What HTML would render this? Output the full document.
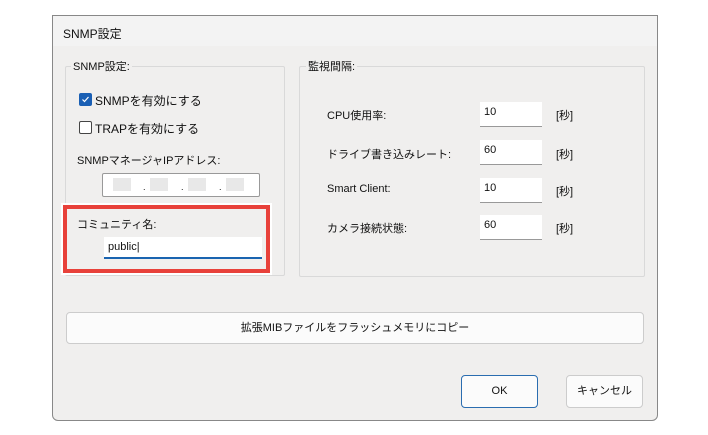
<!DOCTYPE html><html><head><meta charset="utf-8"><style>
*{box-sizing:border-box;margin:0;padding:0}
body{width:708px;height:435px;background:#fff;position:relative;overflow:hidden;font-family:"Liberation Sans","Noto Sans CJK JP",sans-serif;font-size:11px;color:#111}
.a{position:absolute}
.dlg{left:52px;top:15px;width:606px;height:406px;background:#f0efee;border:1px solid #888;border-radius:0 0 6px 6px}
.title{left:53px;top:16px;width:604px;height:30px;background:#f3f3f3;font-size:12px;padding:9px 0 0 10px}
.grp{border:1px solid #d9d9d9;border-radius:2px}
.lg{background:#f0efee;padding:0 2px;font-size:11px}
.tb{background:#fff;border-bottom:1px solid #999;font-size:11px;padding:4px 0 0 4px}
.btn{background:#fbfbfb;border:1px solid #ccc;border-radius:4px;text-align:center;font-size:11px}
.cb{width:13px;height:13px;border:1px solid #444;border-radius:2px;background:#fff}
</style></head><body>
<div class="a dlg"></div>
<div class="a title">SNMP設定</div>
<div class="a grp" style="left:65px;top:66px;width:220px;height:210px"></div>
<div class="a lg" style="left:71px;top:58px">SNMP設定:</div>
<div class="a cb" style="left:79px;top:93px;background:#1a5fb4;border-color:#1a5fb4"><svg width="11" height="11" viewBox="0 0 11 11" style="position:absolute;left:0;top:0"><path d="M2.5 5.5l2 2 4-4.5" stroke="#fff" stroke-width="1.2" fill="none"/></svg></div>
<div class="a" style="left:95px;top:92px;font-size:12px">SNMPを有効にする</div>
<div class="a cb" style="left:79px;top:121px"></div>
<div class="a" style="left:95px;top:120px;font-size:12px">TRAPを有効にする</div>
<div class="a" style="left:77px;top:152px">SNMPマネージャIPアドレス:</div>
<div class="a" style="left:102px;top:173px;width:158px;height:24px;background:#fff;border:1px solid #999;border-radius:2px"></div>
<div class="a" style="left:113px;top:178px;width:18px;height:13px;background:#e8e8e8"></div>
<div class="a" style="left:150px;top:178px;width:18px;height:13px;background:#e8e8e8"></div>
<div class="a" style="left:188px;top:178px;width:18px;height:13px;background:#e8e8e8"></div>
<div class="a" style="left:226px;top:178px;width:18px;height:13px;background:#e8e8e8"></div>
<div class="a" style="left:143px;top:182px;font-size:9px">.</div>
<div class="a" style="left:181px;top:182px;font-size:9px">.</div>
<div class="a" style="left:219px;top:182px;font-size:9px">.</div>
<div class="a" style="left:61px;top:203px;width:211px;height:72px;border:2px solid #fff"></div>
<div class="a" style="left:63px;top:205px;width:207px;height:68px;border:4px solid #e8413a"></div>
<div class="a" style="left:77px;top:216px">コミュニティ名:</div>
<div class="a tb" style="left:104px;top:237px;width:158px;height:22px;border-bottom:2px solid #1a64b0;font-size:11px">public|</div>
<div class="a grp" style="left:299px;top:66px;width:346px;height:211px"></div>
<div class="a lg" style="left:306px;top:58px">監視間隔:</div>
<div class="a" style="left:327px;top:107px">CPU使用率:</div>
<div class="a" style="left:327px;top:146px">ドライブ書き込みレート:</div>
<div class="a" style="left:327px;top:183px">Smart Client:</div>
<div class="a" style="left:327px;top:220px">カメラ接続状態:</div>
<div class="a tb" style="left:480px;top:102px;width:62px;height:25px">10</div>
<div class="a tb" style="left:480px;top:140px;width:62px;height:25px">60</div>
<div class="a tb" style="left:480px;top:178px;width:62px;height:25px">10</div>
<div class="a tb" style="left:480px;top:215px;width:62px;height:25px">60</div>
<div class="a" style="left:556px;top:107px">[秒]</div>
<div class="a" style="left:556px;top:146px">[秒]</div>
<div class="a" style="left:556px;top:183px">[秒]</div>
<div class="a" style="left:556px;top:220px">[秒]</div>
<div class="a btn" style="left:66px;top:312px;width:578px;height:32px;line-height:30px">拡張MIBファイルをフラッシュメモリにコピー</div>
<div class="a btn" style="left:461px;top:375px;width:77px;height:33px;line-height:31px;border:1px solid #2a6db0">OK</div>
<div class="a btn" style="left:566px;top:375px;width:77px;height:33px;line-height:31px">キャンセル</div>
</body></html>
